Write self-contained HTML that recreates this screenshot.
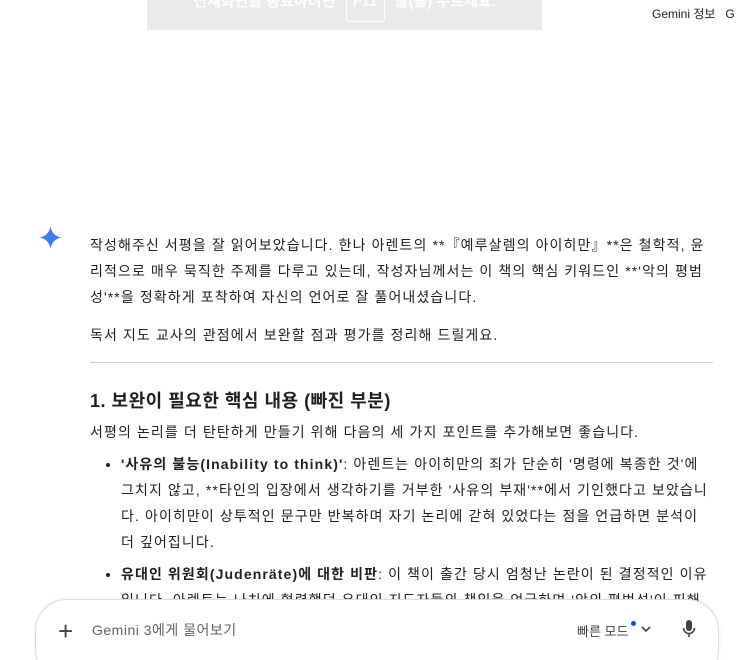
<!DOCTYPE html>
<html style="overflow:hidden;height:660px"><head><meta charset="utf-8"><style>
body{margin:0;width:743px;height:660px;overflow:hidden;background:#fff;font-family:"Liberation Sans","Noto Sans CJK KR",sans-serif;color:#1f1f1f;position:relative}
.banner{position:absolute;left:147px;top:0;width:395px;height:30px;background:#e9eaea;color:#fff;font-size:15px;font-weight:bold;text-align:center;line-height:14px;overflow:hidden}
.banner span.k{display:inline-block;border:1px solid #fff;border-radius:3px;padding:0 6px;height:26px;margin:0 6px}
.top{position:absolute;top:5px;left:652px;font-size:12px;color:#1f1f1f;white-space:nowrap}
.c{position:absolute;left:90px;width:623px;font-size:14px;line-height:26px;letter-spacing:1.1px}
p{margin:0}
hr{border:0;border-top:1px solid #d0d0d0;margin:0}
h3{font-size:18px;margin:0;font-weight:bold;letter-spacing:0.5px}
ul{margin:0;padding-left:31px}
li{margin:0}
.box{position:absolute;left:35px;top:599px;width:682px;height:80px;border:1px solid #dcdcdc;border-radius:32px;background:#fff;box-shadow:0 0 4px rgba(0,0,0,.08)}
</style></head><body>
<div class="banner"><span style="position:relative;top:-6px">전체화면을 종료하려면 <span class="k">F11</span> 을(를) 누르세요.</span></div>
<div class="top">Gemini 정보 &nbsp; G</div>
<svg style="position:absolute;left:39px;top:226px" width="23" height="23" viewBox="0 0 24 24"><path d="M12 0C12.6 6.5 17.5 11.4 24 12C17.5 12.6 12.6 17.5 12 24C11.4 17.5 6.5 12.6 0 12C6.5 11.4 11.4 6.5 12 0Z" fill="#3f7df0"/></svg>
<div class="c" style="top:232px">
<p>작성해주신 서평을 잘 읽어보았습니다. 한나 아렌트의 **『예루살렘의 아이히만』**은 철학적, 윤리적으로 매우 묵직한 주제를 다루고 있는데, 작성자님께서는 이 책의 핵심 키워드인 **'악의 평범성'**을 정확하게 포착하여 자신의 언어로 잘 풀어내셨습니다.</p>
<p style="margin-top:12px">독서 지도 교사의 관점에서 보완할 점과 평가를 정리해 드릴게요.</p>
<hr style="margin-top:14px">
<h3 style="margin-top:24px;line-height:28px">1. 보완이 필요한 핵심 내용 (빠진 부분)</h3>
<p style="margin-top:4px">서평의 논리를 더 탄탄하게 만들기 위해 다음의 세 가지 포인트를 추가해보면 좋습니다.</p>
<ul style="margin-top:6px">
<li><b>'사유의 불능(Inability to think)'</b>: 아렌트는 아이히만의 죄가 단순히 '명령에 복종한 것'에 그치지 않고, **타인의 입장에서 생각하기를 거부한 '사유의 부재'**에서 기인했다고 보았습니다. 아이히만이 상투적인 문구만 반복하며 자기 논리에 갇혀 있었다는 점을 언급하면 분석이 더 깊어집니다.</li>
<li style="margin-top:6px"><b>유대인 위원회(Judenräte)에 대한 비판</b>: 이 책이 출간 당시 엄청난 논란이 된 결정적인 이유입니다. 아렌트는 나치에 협력했던 유대인 지도자들의 책임을 언급하며 '악의 평범성'이 피해</li>
</ul>
</div>
<div class="box">
<div style="position:absolute;left:22px;top:16px;font-size:26px;color:#444;font-weight:300">+</div>
<div style="position:absolute;left:56px;top:20px;font-size:14px;color:#5f6368;letter-spacing:0.5px">Gemini 3에게 물어보기</div>
<div style="position:absolute;left:541px;top:21px;font-size:13px;color:#3c4043">빠른 모드</div>
<div style="position:absolute;left:595px;top:21px;width:5px;height:5px;border-radius:50%;background:#0b57d0"></div>
<svg style="position:absolute;left:605px;top:25px" width="10" height="8" viewBox="0 0 10 8"><path d="M1 2l4 4 4-4" stroke="#444" stroke-width="1.6" fill="none"/></svg>
<svg style="position:absolute;left:646px;top:20px" width="14" height="18" viewBox="0 0 14 18"><rect x="4" y="0" width="6" height="11" rx="3" fill="#444"/><path d="M1.5 8a5.5 5.5 0 0 0 11 0M7 13.5V17" stroke="#444" stroke-width="1.6" fill="none"/></svg>
</div>
</body></html>
